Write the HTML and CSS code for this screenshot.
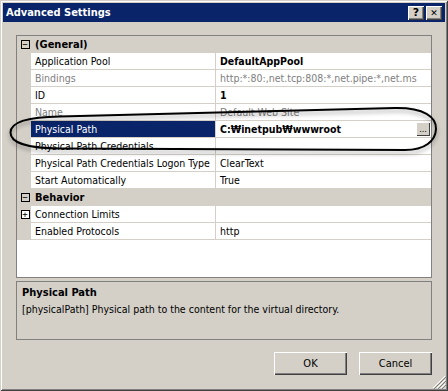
FILE: index.html
```html
<!DOCTYPE html>
<html>
<head>
<title>Advanced Settings</title>
<link rel="stylesheet" href="styles.css">
</head>
<body>
<div class="window">
  <div class="caption">
    <span class="caption-title">Advanced Settings</span>
    <span class="caption-btn">?</span>
    <span class="caption-btn close">&#x2715;</span>
  </div>

  <div class="content">
    <div class="grid">
      <div class="row category">
        <span class="gutter"><span class="toggle">&minus;</span></span>
        <span class="cat-name">(General)</span>
      </div>
      <div class="row">
        <span class="gutter"></span>
        <span class="name">Application Pool</span>
        <span class="value bold">DefaultAppPool</span>
      </div>
      <div class="row">
        <span class="gutter"></span>
        <span class="name disabled">Bindings</span>
        <span class="value disabled">http:*:80:,net.tcp:808:*,net.pipe:*,net.ms</span>
      </div>
      <div class="row">
        <span class="gutter"></span>
        <span class="name">ID</span>
        <span class="value bold">1</span>
      </div>
      <div class="row">
        <span class="gutter"></span>
        <span class="name disabled">Name</span>
        <span class="value disabled">Default Web Site</span>
      </div>
      <div class="row">
        <span class="gutter"></span>
        <span class="name selected">Physical Path</span>
        <span class="value bold">C:&#x20A9;inetpub&#x20A9;wwwroot<span class="dots">...</span></span>
      </div>
      <div class="row">
        <span class="gutter"></span>
        <span class="name">Physical Path Credentials</span>
        <span class="value"></span>
      </div>
      <div class="row">
        <span class="gutter"></span>
        <span class="name">Physical Path Credentials Logon Type</span>
        <span class="value">ClearText</span>
      </div>
      <div class="row">
        <span class="gutter"></span>
        <span class="name">Start Automatically</span>
        <span class="value">True</span>
      </div>
      <div class="row category">
        <span class="gutter"><span class="toggle">&minus;</span></span>
        <span class="cat-name">Behavior</span>
      </div>
      <div class="row">
        <span class="gutter"><span class="toggle">+</span></span>
        <span class="name">Connection Limits</span>
        <span class="value"></span>
      </div>
      <div class="row">
        <span class="gutter"></span>
        <span class="name">Enabled Protocols</span>
        <span class="value">http</span>
      </div>
    </div>

    <div class="help">
      <div class="help-title">Physical Path</div>
      <div>[physicalPath] Physical path to the content for the virtual directory.</div>
    </div>

    <div class="buttons">
      <button class="btn">OK</button>
      <button class="btn">Cancel</button>
    </div>
  </div>

  <svg class="grip" width="14" height="14" viewBox="0 0 14 14">
    <path d="M13 1 L1 13 M13 5 L5 13 M13 9 L9 13" stroke="#fff" stroke-width="1"/>
    <path d="M14 2 L2 14 M14 6 L6 14 M14 10 L10 14" stroke="#808080" stroke-width="1"/>
  </svg>

  <svg class="mark" width="448" height="391" viewBox="0 0 448 391">
    <defs>
      <filter id="shade" x="-10%" y="-50%" width="120%" height="200%">
        <feDropShadow dx="0" dy="3" stdDeviation="2" flood-color="#000" flood-opacity="0.35"/>
      </filter>
    </defs>
    <path d="M60 116.5 L395 108 C424 107.5 436.5 117 436 129 C435.5 141 425 150 405 150 L60 148.5 C26 148.5 10.5 142 10.5 132.5 C10.5 123 26 117 60 116.5 Z"
          fill="none" stroke="#000" stroke-width="2" filter="url(#shade)"/>
  </svg>
</div>
</body>
</html>
```

FILE: styles.css
```css
body {
    margin: 0;
    background-color: #d4d0c8;
    font-family: "DejaVu Sans Condensed", "DejaVu Sans", sans-serif;
    font-size: 10.5px;
    color: #000;
}

.window {
    position: relative;
    width: 448px;
    height: 391px;
    box-sizing: border-box;
    background-color: #d4d0c8;
    box-shadow: inset 1px 1px #d4d0c8, inset -1px -1px #404040, inset 2px 2px #fff, inset -2px -2px #808080;
    padding: 3px;
}

.caption {
    height: 19px;
    background-color: #0a246a;
    display: flex;
    align-items: center;
    padding: 0 3px 0 3px;
}

.caption-title {
    flex: 1;
    color: #fff;
    font-weight: bold;
    font-size: 11px;
}

.caption-btn {
    width: 16px;
    height: 14px;
    box-sizing: border-box;
    background-color: #d4d0c8;
    box-shadow: inset 1px 1px #fff, inset -1px -1px #404040, inset -2px -2px #808080;
    font-weight: bold;
    font-size: 11px;
    line-height: 14px;
    text-align: center;
    font-family: "DejaVu Sans", sans-serif;
}

.close {
    margin-left: 2px;
    font-size: 9px;
}

.content {
    padding: 13px 13px 0 13px;
}

.grid {
    height: 243px;
    box-sizing: border-box;
    border: 1px solid #808080;
    background-color: #fff;
}

.row {
    display: grid;
    grid-template-columns: 14px 185px 1fr;
    height: 17px;
}

.gutter {
    background-color: #d4d0c8;
    display: flex;
    align-items: center;
    justify-content: center;
}

.toggle {
    width: 9px;
    height: 9px;
    box-sizing: border-box;
    border: 1px solid #000;
    background-color: #fff;
    font-family: "DejaVu Sans Mono", monospace;
    font-size: 9px;
    line-height: 7px;
    text-align: center;
    margin-left: 2px;
}

.category .toggle {
    background-color: #d4d0c8;
}

.category {
    background-color: #d4d0c8;
}

.cat-name {
    grid-column: 2 / 4;
    font-weight: bold;
    font-size: 11px;
    padding-left: 4px;
    line-height: 17px;
}

.name,
.value {
    border-bottom: 1px solid #d4d0c8;
    line-height: 16px;
    white-space: nowrap;
    overflow: hidden;
    padding-left: 4px;
}

.name {
    border-right: 1px solid #d4d0c8;
}

.value {
    position: relative;
    padding-left: 4px;
}

.bold {
    font-weight: bold;
}

.disabled {
    color: #808080;
}

.selected {
    background-color: #0a246a;
    color: #fff;
}

.dots {
    position: absolute;
    right: 1px;
    top: 1px;
    width: 14px;
    height: 14px;
    box-sizing: border-box;
    background-color: #d4d0c8;
    box-shadow: inset 1px 1px #fff, inset -1px -1px #404040;
    font-weight: normal;
    font-size: 9px;
    line-height: 14px;
    text-align: center;
}

.help {
    margin-top: 3px;
    height: 59px;
    box-sizing: border-box;
    border: 1px solid #808080;
    padding: 3px 5px;
    line-height: 16px;
}

.help-title {
    font-weight: bold;
    font-size: 11px;
}

.buttons {
    display: flex;
    justify-content: flex-end;
    gap: 12px;
    margin-top: 12px;
}

.btn {
    width: 73px;
    height: 23px;
    background-color: #d4d0c8;
    border: none;
    box-shadow: inset 1px 1px #fff, inset -1px -1px #404040, inset -2px -2px #808080;
    font-family: "DejaVu Sans Condensed", "DejaVu Sans", sans-serif;
    font-size: 11px;
    color: #000;
    padding: 0;
}

.grip {
    position: absolute;
    right: 2px;
    bottom: 2px;
}

.mark {
    position: absolute;
    left: 0;
    top: 0;
    pointer-events: none;
}
```
